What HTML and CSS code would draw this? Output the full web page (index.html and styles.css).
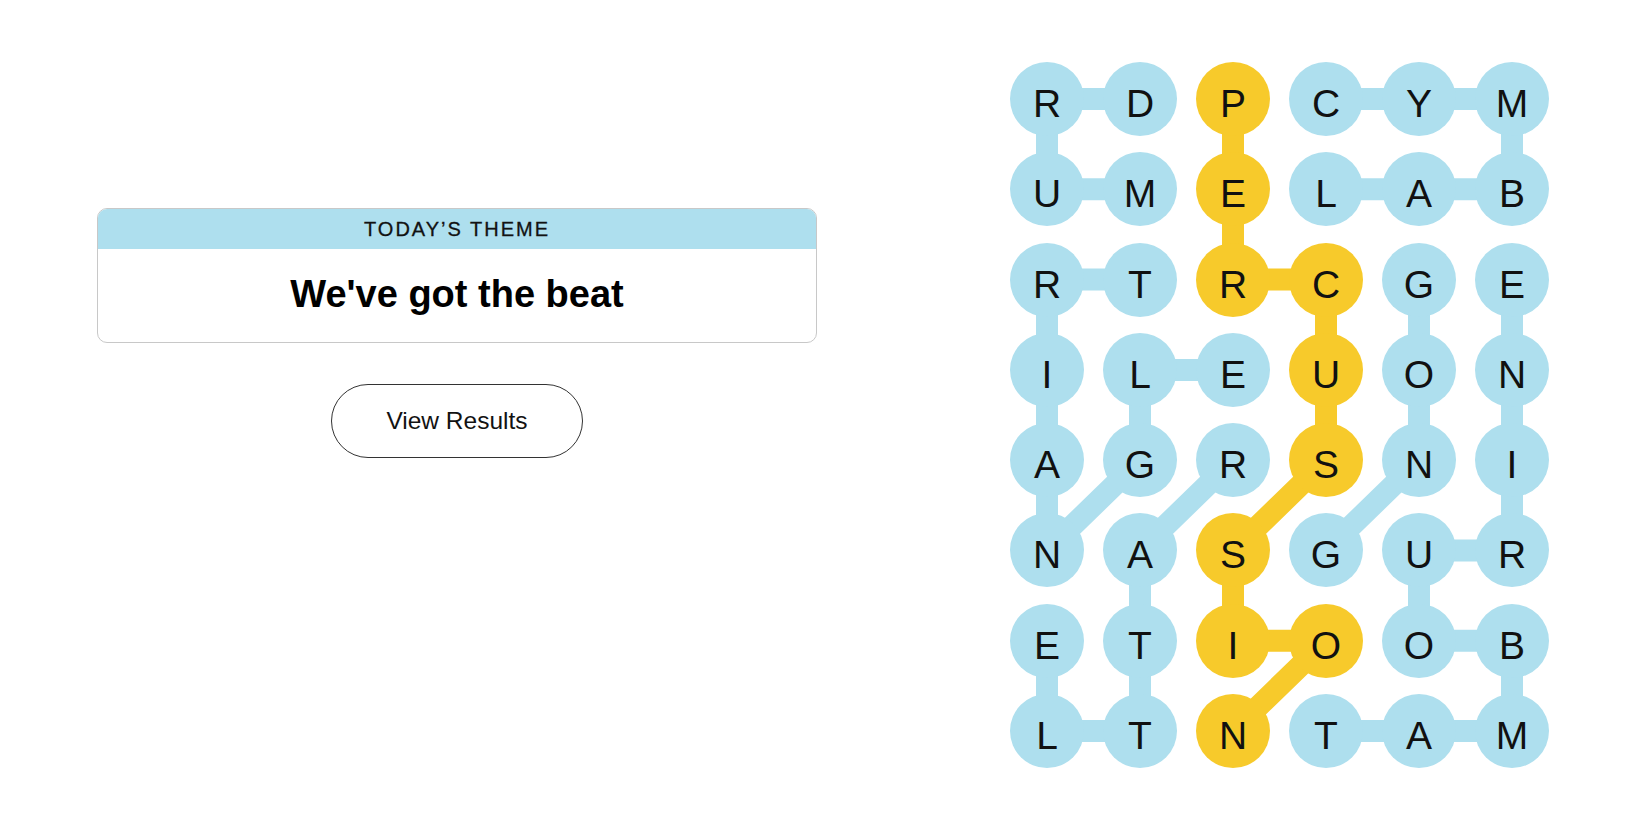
FILE: index.html
```html
<!DOCTYPE html>
<html lang="en">
<head>
<meta charset="utf-8">
<title>Strands</title>
<link rel="stylesheet" href="styles.css">
</head>
<body>
<main class="page">
  <section class="left">
    <div class="theme-card">
      <div class="theme-head">TODAY’S THEME</div>
      <div class="theme-body">We've got the beat</div>
    </div>
    <button class="results-btn">View Results</button>
  </section>
  <section class="board">
    <svg class="links" width="539" height="707" viewBox="0 0 539 707">
      <g class="blue">
        <polyline points="130,37 37,37 37,127.3 130,127.3"/>
        <polyline points="316,37 502,37 502,127.3 316,127.3"/>
        <polyline points="130,217.6 37,217.6 37,488.5 130,398.2 130,307.9 223,307.9"/>
        <polyline points="223,398.2 130,488.5 130,669.1 37,669.1 37,578.8"/>
        <polyline points="409,217.6 409,398.2 316,488.5"/>
        <polyline points="316,669.1 502,669.1 502,578.8 409,578.8 409,488.5 502,488.5 502,217.6"/>
      </g>
      <g class="yellow">
        <polyline points="223,37 223,217.6 316,217.6 316,398.2 223,488.5 223,578.8 316,578.8 223,669.1"/>
      </g>
    </svg>
    <div class="grid">
      <span class="cell">R</span><span class="cell">D</span><span class="cell span">P</span><span class="cell">C</span><span class="cell">Y</span><span class="cell">M</span>
      <span class="cell">U</span><span class="cell">M</span><span class="cell span">E</span><span class="cell">L</span><span class="cell">A</span><span class="cell">B</span>
      <span class="cell">R</span><span class="cell">T</span><span class="cell span">R</span><span class="cell span">C</span><span class="cell">G</span><span class="cell">E</span>
      <span class="cell">I</span><span class="cell">L</span><span class="cell">E</span><span class="cell span">U</span><span class="cell">O</span><span class="cell">N</span>
      <span class="cell">A</span><span class="cell">G</span><span class="cell">R</span><span class="cell span">S</span><span class="cell">N</span><span class="cell">I</span>
      <span class="cell">N</span><span class="cell">A</span><span class="cell span">S</span><span class="cell">G</span><span class="cell">U</span><span class="cell">R</span>
      <span class="cell">E</span><span class="cell">T</span><span class="cell span">I</span><span class="cell span">O</span><span class="cell">O</span><span class="cell">B</span>
      <span class="cell">L</span><span class="cell">T</span><span class="cell span">N</span><span class="cell">T</span><span class="cell">A</span><span class="cell">M</span>
    </div>
  </section>
</main>
</body>
</html>
```

FILE: styles.css
```css
html, body {
  margin: 0;
  padding: 0;
  background: #ffffff;
}

body {
  font-family: "Liberation Sans", Arial, sans-serif;
  color: #000;
}

.page {
  display: flex;
  align-items: flex-start;
  width: 1650px;
  height: 825px;
  overflow: hidden;
}

.left {
  width: 720px;
  margin-left: 97px;
  padding-top: 208px;
  display: flex;
  flex-direction: column;
  align-items: center;
}

.theme-card {
  box-sizing: border-box;
  width: 720px;
  height: 135px;
  border: 1px solid #c8c8c8;
  border-radius: 10px;
  overflow: hidden;
  display: flex;
  flex-direction: column;
}

.theme-head {
  height: 40px;
  background: #aedfee;
  display: flex;
  align-items: center;
  justify-content: center;
  font-size: 20px;
  letter-spacing: 2px;
  color: #121212;
  -webkit-text-stroke: 0.3px #121212;
}

.theme-body {
  flex: 1;
  display: flex;
  align-items: center;
  justify-content: center;
  font-size: 38px;
  font-weight: bold;
  color: #000;
  padding-bottom: 2px;
}

.results-btn {
  margin-top: 41px;
  width: 252px;
  height: 74px;
  box-sizing: border-box;
  border: 1px solid #333;
  border-radius: 37px;
  background: #fff;
  font-family: "Liberation Sans", Arial, sans-serif;
  font-size: 24.5px;
  color: #121212;
  padding: 0;
}

.board {
  position: relative;
  margin-left: 193px;
  margin-top: 62px;
  width: 539px;
  height: 707px;
}

.links {
  position: absolute;
  left: 0;
  top: 0;
}

.links polyline {
  fill: none;
  stroke-width: 22;
  stroke-linejoin: round;
}

.blue polyline {
  stroke: #aedfee;
}

.yellow polyline {
  stroke: #f7ca2b;
}

.grid {
  position: relative;
  display: grid;
  grid-template-columns: repeat(6, 74px);
  grid-auto-rows: 74px;
  column-gap: 19px;
  row-gap: 16.3px;
}

.cell {
  box-sizing: border-box;
  width: 74px;
  height: 74px;
  padding-top: 9px;
  border-radius: 50%;
  background: #aedfee;
  display: flex;
  align-items: center;
  justify-content: center;
  font-size: 39px;
  line-height: 1;
  color: #111;
}

.cell.span {
  background: #f7ca2b;
}
```
